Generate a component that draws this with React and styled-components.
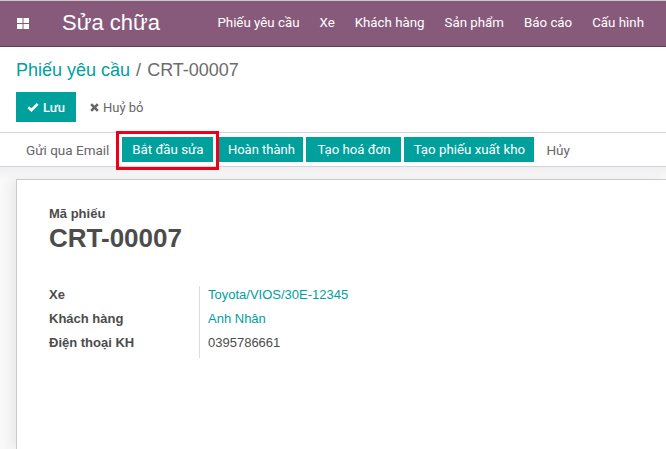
import React from "react";
import styled, { createGlobalStyle } from "styled-components";

const Global = createGlobalStyle`
  html, body { margin: 0; padding: 0; background: #fff; overflow: hidden; }
  body { font-family: Roboto, "Liberation Sans", sans-serif; font-size: 13px; color: #4c4c4c; }
`;
const Page = styled.div`
  width: 666px; height: 449px; display: flex; flex-direction: column; overflow: hidden;
`;
const Nav = styled.header`
  height: 47px; box-sizing: border-box; border-top: 1px solid #c9c9c9; border-bottom: 1px solid #5f3f57;
  background: #875a7b; display: flex; align-items: center; color: #fff; flex-shrink: 0;
`;
const Apps = styled.svg`
  width: 12px; height: 11px; margin-left: 17px; flex-shrink: 0;
`;
const Brand = styled.div`
  font-size: 22px; margin-left: 33px; font-family: "Liberation Sans", sans-serif; position: relative; top: -1px;
`;
const Menu = styled.nav`
  margin-left: auto; margin-right: 22px; display: flex; gap: 20px; font-size: 13.3px; position: relative; top: -1px;
`;
const Head = styled.div`
  padding: 11px 16px 0; height: 85px; box-sizing: border-box; flex-shrink: 0;
`;
const Crumbs = styled.div`
  font-size: 18px; line-height: 24px; color: #6c6c6c; font-family: "Liberation Sans", sans-serif;
  a { color: #00a09d; }
`;
const Sep = styled.span`
  margin: 0 1px;
`;
const Actions = styled.div`
  display: flex; align-items: center; margin-top: 10px;
`;
const Save = styled.div`
  width: 60px; height: 30px; background: #00a09d; color: #fff; display: flex; align-items: center; justify-content: center; gap: 4px; font-weight: 500;
`;
const Discard = styled.div`
  display: flex; align-items: center; gap: 4px; margin-left: 14px; color: #666;
`;
const Bar = styled.div`
  height: 33px; border-top: 1px solid #ced4da; border-bottom: 1px solid #ced4da; display: flex; align-items: center; flex-shrink: 0; padding-left: 26px; box-sizing: content-box;
`;
const Plain = styled.span`
  color: #666; font-size: 13.5px; margin-left: ${p => p.$ml || 0}px;
`;
const Btn = styled.div`
  position: relative; height: 25px; background: #00a09d; color: #fff; display: flex; align-items: center; justify-content: center;
  width: ${p => p.$w}px; margin-left: ${p => p.$ml}px; font-size: ${p => p.$fs || 13.3}px;
`;
const Mark = styled.span`
  position: absolute; left: -6px; right: -6px; top: -6px; bottom: -8px; border: 3px solid #ee0019; box-sizing: border-box; pointer-events: none;
`;
const Sheet = styled.main`
  flex: 1; background: linear-gradient(#efeff1, #f9f9f9 12px, #f9f9f9); padding: 12px 0 0 16px; min-height: 0; display: flex;
`;
const Card = styled.section`
  flex: 1; background: #fff; border-top: 1px solid #c9cad2; border-left: 1px solid #c9cad2; padding: 27px 32px; box-shadow: -6px 0 10px rgba(0,0,0,.06);
`;
const Label = styled.div`
  font-weight: 700; font-size: 13px; color: #4c4c4c; line-height: 14px; font-family: "Liberation Sans", sans-serif;
`;
const Title = styled.h1`
  margin: 2px 0 0; font: 700 26px/30px "Liberation Sans", sans-serif; color: #4c4c4c;
`;
const Fields = styled.div`
  margin-top: 33px; display: grid; grid-template-columns: 150px auto; justify-content: start;
`;
const Key = styled.div`
  font: 700 13px/18px "Liberation Sans", sans-serif; color: #4c4c4c; padding-bottom: 6px;
`;
const Val = styled.div`
  border-left: 1px solid #ddd; padding: 0 0 6px 8px; font: 13px/18px "Liberation Sans", sans-serif; color: ${p => p.$link ? "#00a09d" : "#4c4c4c"};
`;

export default function App() {
  return (
    <Page>
      <Global />
      <Nav>
        <Apps viewBox="0 0 12 11" fill="#fff">
          <rect x="0" y="0" width="5.5" height="5" />
          <rect x="6.5" y="0" width="5.5" height="5" />
          <rect x="0" y="6" width="5.5" height="5" />
          <rect x="6.5" y="6" width="5.5" height="5" />
        </Apps>
        <Brand>Sửa chữa</Brand>
        <Menu>
          <span>Phiếu yêu cầu</span><span>Xe</span><span>Khách hàng</span><span>Sản phẩm</span><span>Báo cáo</span><span>Cấu hình</span>
        </Menu>
      </Nav>
      <Head>
        <Crumbs><a>Phiếu yêu cầu</a> <Sep>/</Sep> CRT-00007</Crumbs>
        <Actions>
          <Save>
            <svg width="12" height="10" viewBox="0 0 12 10"><path d="M1.3 5.2 4.4 8.2 10.7 1.8" fill="none" stroke="#fff" strokeWidth="2.6" /></svg>
            Lưu
          </Save>
          <Discard>
            <svg width="9" height="9" viewBox="0 0 9 9"><path d="M1.2 1.2 7.8 7.8M7.8 1.2 1.2 7.8" stroke="#666" strokeWidth="2.6" /></svg>
            Huỷ bỏ
          </Discard>
        </Actions>
      </Head>
      <Bar>
        <Plain>Gửi qua Email</Plain>
        <Btn $w={91} $ml={13}>Bắt đầu sửa<Mark /></Btn>
        <Btn $w={84} $ml={6} $fs={13}>Hoàn thành</Btn>
        <Btn $w={95} $ml={3} $fs={13.2}>Tạo hoá đơn</Btn>
        <Btn $w={130} $ml={3}>Tạo phiếu xuất kho</Btn>
        <Plain $ml={12}>Hủy</Plain>
      </Bar>
      <Sheet>
        <Card>
          <Label>Mã phiếu</Label>
          <Title>CRT-00007</Title>
          <Fields>
            <Key>Xe</Key><Val $link>Toyota/VIOS/30E-12345</Val>
            <Key>Khách hàng</Key><Val $link>Anh Nhân</Val>
            <Key>Điện thoại KH</Key><Val>0395786661</Val>
          </Fields>
        </Card>
      </Sheet>
    </Page>
  );
}
